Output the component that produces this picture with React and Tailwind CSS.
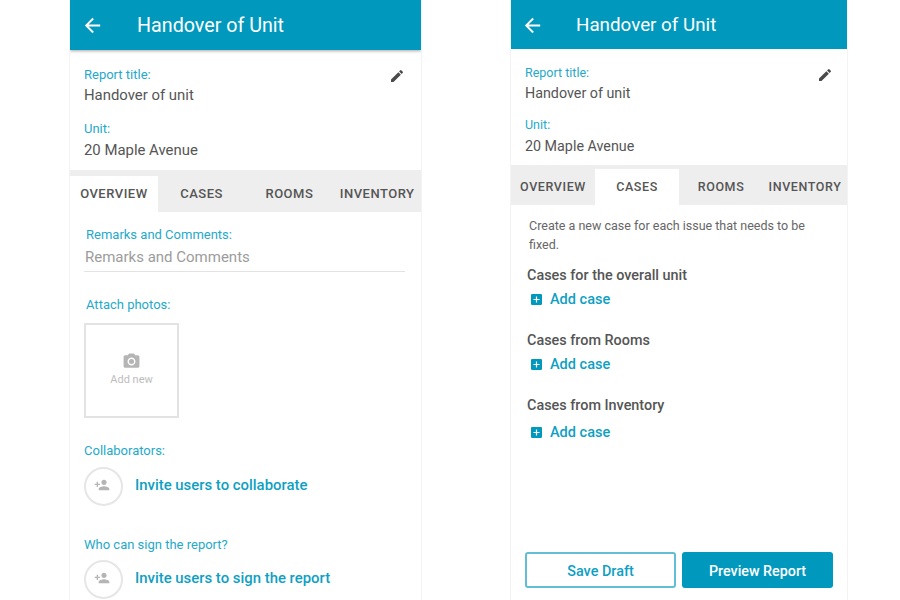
import React from 'react';

const ArrowBack = () => (
    <svg viewBox="0 0 24 24" className="w-[23px] h-[23px] fill-white">
        <path d="M20 11H7.83l5.59-5.59L12 4l-8 8 8 8 1.41-1.41L7.83 13H20v-2z" />
    </svg>
);

const Pencil = () => (
    <svg viewBox="0 0 24 24" className="w-[16px] h-[16px] fill-[#4a4a4a]">
        <path d="M3 17.25V21h3.75L17.81 9.94l-3.75-3.75L3 17.25zM20.71 7.04a1 1 0 0 0 0-1.41l-2.34-2.34a1 1 0 0 0-1.41 0l-1.83 1.83 3.75 3.75 1.83-1.83z" />
    </svg>
);

const PersonAdd = () => (
    <svg viewBox="0 0 24 24" className="w-[16px] h-[16px] fill-[#b5b5b5]">
        <path d="M15 12c2.21 0 4-1.79 4-4s-1.79-4-4-4-4 1.79-4 4 1.79 4 4 4zm-9-2V7H4v3H1v2h3v3h2v-3h3v-2H6zm9 4c-2.67 0-8 1.34-8 4v2h16v-2c0-2.66-5.33-4-8-4z" />
    </svg>
);

const Camera = () => (
    <svg viewBox="0 0 24 24" className="w-[19px] h-[19px] fill-[#b5b5b5]">
        <circle cx="12" cy="12" r="3.2" />
        <path d="M9 2L7.17 4H4c-1.1 0-2 .9-2 2v12c0 1.1.9 2 2 2h16c1.1 0 2-.9 2-2V6c0-1.1-.9-2-2-2h-3.17L15 2H9zm3 15c-2.76 0-5-2.24-5-5s2.24-5 5-5 5 2.24 5 5-2.24 5-5 5z" />
    </svg>
);

const AddBox = () => (
    <svg viewBox="3 3 18 18" className="w-[11px] h-[11px] -translate-y-px fill-[#0099bd]">
        <path d="M19 3H5c-1.11 0-2 .9-2 2v14c0 1.1.89 2 2 2h14c1.1 0 2-.9 2-2V5c0-1.1-.9-2-2-2zm-2 10h-4v4h-2v-4H7v-2h4V7h2v4h4v2z" />
    </svg>
);

const tabs = ['OVERVIEW', 'CASES', 'ROOMS', 'INVENTORY'];

const InviteRow = ({ text }) => (
    <div className="flex items-center gap-[12px] mt-[8px]">
        <div className="w-[39px] h-[39px] rounded-full border-2 border-[#e6e6e6] flex items-center justify-center pb-[3px] pr-[3px]">
            <PersonAdd />
        </div>
        <span className="text-[14.9px] font-medium text-[#0f9fc3] pb-[2px]">{text}</span>
    </div>
);

const AddCase = ({ className }) => (
    <div className={`flex items-center pl-[4px] gap-[8px] h-[20px] ${className}`}>
        <AddBox />
        <span className="text-[14.5px] text-[#0f9fc3] font-medium">Add case</span>
    </div>
);

const LeftPhone = () => (
    <div className="w-[353px] h-[600px] shrink-0 border-x border-[#f3f3f3] overflow-hidden bg-white">
        <div className="h-[50px] bg-[#0099bd] shadow-[0_1px_3px_rgba(0,0,0,0.35)] flex items-center pl-[11px] relative">
            <ArrowBack />
            <span className="ml-[33px] pt-[2px] text-[19.7px] text-white">Handover of Unit</span>
        </div>
        <div className="h-[120px] pl-[14px] pr-[16px] pt-[17px] relative">
            <div className="absolute right-[16px] top-[18px]"><Pencil /></div>
            <p className="text-[13px] leading-[16px] text-[#25a9ca]">Report title:</p>
            <p className="text-[14.9px] leading-[20px] mt-[2px] text-[#555]">Handover of unit</p>
            <p className="text-[13px] leading-[16px] mt-[16px] text-[#25a9ca]">Unit:</p>
            <p className="text-[14.9px] leading-[20px] mt-[3px] text-[#555]">20 Maple Avenue</p>
        </div>
        <div className="h-[42px] bg-[#eeeeee] grid grid-cols-4 items-end">
            {tabs.map((t, i) => (
                <div key={t} className={`h-[36px] flex items-center justify-center text-[13px] font-medium tracking-[0.5px] text-[#555] ${i === 0 ? 'bg-white' : ''}`}>
                    {t}
                </div>
            ))}
        </div>
        <div className="pl-[14px] pr-[16px] pt-[15px]">
            <div className="pl-[1px] border-b border-[#e3e3e3] pb-[4px]">
                <p className="pl-[1px] text-[13px] leading-[16px] text-[#25a9ca]">Remarks and Comments:</p>
                <p className="text-[15px] leading-[20px] mt-[4px] text-[#9c9c9c]">Remarks and Comments</p>
            </div>
            <p className="pl-[2px] text-[13px] leading-[16px] mt-[25px] text-[#25a9ca]">Attach photos:</p>
            <div className="w-[95px] h-[95px] mt-[10px] border-2 border-[#e3e3e3] flex flex-col items-center pt-[27px]">
                <Camera />
                <span className="text-[11px] leading-[14px] mt-[2px] text-[#bdbdbd]">Add new</span>
            </div>
            <p className="text-[13px] leading-[16px] mt-[25px] text-[#25a9ca]">Collaborators:</p>
            <InviteRow text="Invite users to collaborate" />
            <p className="text-[13px] leading-[16px] mt-[31px] -mb-[1px] text-[#25a9ca]">Who can sign the report?</p>
            <InviteRow text="Invite users to sign the report" />
        </div>
    </div>
);

const RightPhone = () => (
    <div className="w-[338px] h-[600px] shrink-0 border-x border-[#f3f3f3] overflow-hidden bg-white flex flex-col">
        <div className="h-[49px] bg-[#0099bd] flex items-center pt-[1px] pl-[10px] shrink-0">
            <ArrowBack />
            <span className="ml-[32px] text-[18.8px] text-white">Handover of Unit</span>
        </div>
        <div className="h-[116px] pl-[14px] pt-[16px] relative shrink-0">
            <div className="absolute right-[14px] top-[18px]"><Pencil /></div>
            <p className="text-[12.5px] leading-[16px] text-[#25a9ca]">Report title:</p>
            <p className="text-[14.3px] leading-[20px] mt-[2px] text-[#555]">Handover of unit</p>
            <p className="text-[12.5px] leading-[16px] mt-[14px] text-[#25a9ca]">Unit:</p>
            <p className="text-[14.3px] leading-[20px] mt-[3px] text-[#555]">20 Maple Avenue</p>
        </div>
        <div className="h-[40px] bg-[#eeeeee] grid grid-cols-4 items-end shrink-0">
            {tabs.map((t, i) => (
                <div key={t} className={`h-[36px] flex items-center justify-center text-[12.5px] font-medium tracking-[0.6px] text-[#555] ${i === 1 ? 'bg-white' : ''}`}>
                    {t}
                </div>
            ))}
        </div>
        <div className="pl-[16px] pr-[14px] pt-[11px] flex-1 flex flex-col">
            <p className="pl-[2px] text-[12.5px] leading-[19px] text-[#666]">
                Create a new case for each issue that needs to be fixed.
            </p>
            <p className="text-[14.4px] leading-[18px] mt-[13px] font-medium text-[#555]">Cases for the overall unit</p>
            <AddCase className="mt-[5px]" />
            <p className="text-[14.4px] leading-[18px] mt-[22px] font-medium text-[#555]">Cases from Rooms</p>
            <AddCase className="mt-[5px]" />
            <p className="text-[14.4px] leading-[18px] mt-[22px] font-medium text-[#555]">Cases from Inventory</p>
            <AddCase className="mt-[8px]" />
            <div className="flex gap-[6px] mt-[109px] -ml-[2px]">
                <button className="w-[151px] h-[36px] pt-[3px] rounded-[3px] border-2 border-[#62bdd6] text-[14.4px] font-medium text-[#0f9fc3]">Save Draft</button>
                <button className="w-[151px] h-[36px] pt-[3px] rounded-[3px] bg-[#0099bd] text-[14.3px] font-medium text-white">Preview Report</button>
            </div>
        </div>
    </div>
);

const App = () => (
    <div className="w-[900px] h-[600px] overflow-hidden bg-white flex items-start pl-[69px] gap-[88px] font-['Roboto',sans-serif]">
        <LeftPhone />
        <RightPhone />
    </div>
);

export default App;
